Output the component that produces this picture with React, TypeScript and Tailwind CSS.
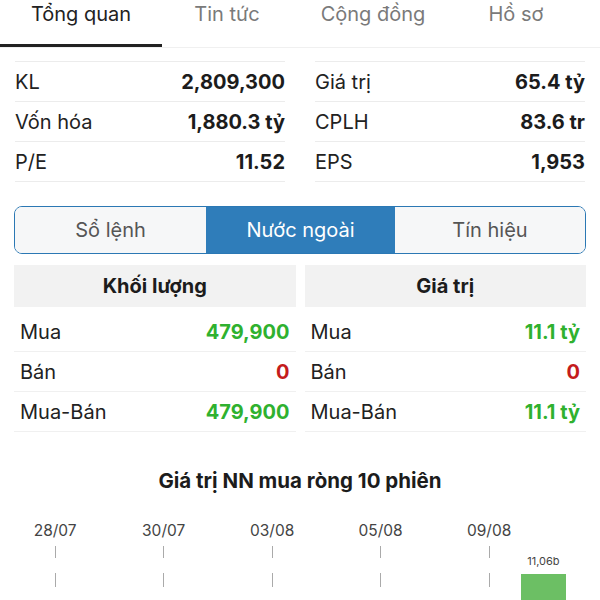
import React from 'react';

const tabs = [
  { label: 'Tổng quan', w: 'w-[162px]', active: true },
  { label: 'Tin tức', w: 'w-[130px]', active: false },
  { label: 'Cộng đồng', w: 'w-[162px]', active: false },
  { label: 'Hồ sơ', w: 'w-[124px]', active: false },
];

const leftStats = [
  ['KL', '2,809,300'],
  ['Vốn hóa', '1,880.3 tỷ'],
  ['P/E', '11.52'],
];

const rightStats = [
  ['Giá trị', '65.4 tỷ'],
  ['CPLH', '83.6 tr'],
  ['EPS', '1,953'],
];

const volumeRows = [
  { label: 'Mua', value: '479,900', color: 'text-[#2fb12f]' },
  { label: 'Bán', value: '0', color: 'text-[#c41c1c]' },
  { label: 'Mua-Bán', value: '479,900', color: 'text-[#2fb12f]' },
];

const valueRows = [
  { label: 'Mua', value: '11.1 tỷ', color: 'text-[#2fb12f]' },
  { label: 'Bán', value: '0', color: 'text-[#c41c1c]' },
  { label: 'Mua-Bán', value: '11.1 tỷ', color: 'text-[#2fb12f]' },
];

// 10 sessions, every other one labelled
const sessions = ['28/07', '', '30/07', '', '03/08', '', '05/08', '', '09/08', ''];

const StatColumn = ({ rows }: { rows: string[][] }) => (
  <div className="border-t border-[#ececec]">
    {rows.map(([label, value]) => (
      <div key={label} className="h-[40px] flex items-center justify-between border-b border-[#ececec]">
        <span className="text-[#222]">{label}</span>
        <span className="font-bold text-[#1c1c1c]">{value}</span>
      </div>
    ))}
  </div>
);

const ForeignColumn = ({ title, rows }: { title: string; rows: typeof volumeRows }) => (
  <div>
    <div className="h-[42px] bg-[#f2f2f2] flex items-center justify-center font-bold text-[#1c1c1c]">{title}</div>
    <div className="pt-[5px]">
      {rows.map((r) => (
        <div key={r.label} className="h-[40px] px-[6px] flex items-center justify-between border-b border-[#f0f0f0]">
          <span className="text-[#222]">{r.label}</span>
          <span className={`font-bold ${r.color}`}>{r.value}</span>
        </div>
      ))}
    </div>
  </div>
);

const App = () => {
  return (
    <div className="w-[600px] h-[600px] overflow-hidden bg-white text-[20px]" style={{ fontFamily: 'Inter, "Noto Sans", sans-serif' }}>
      {/* Top tabs */}
      <nav className="flex h-[48px] border-b border-[#f0f0f0]">
        {tabs.map((t) => (
          <div
            key={t.label}
            className={`${t.w} flex justify-center leading-[28px] ${t.active ? 'text-[#222] border-b-[3px] border-[#222]' : 'text-[#7a7a7a]'}`}
          >
            {t.label}
          </div>
        ))}
      </nav>

      {/* Overview stats */}
      <section className="mt-[13px] px-[15px] grid grid-cols-2 gap-x-[30px]">
        <StatColumn rows={leftStats} />
        <StatColumn rows={rightStats} />
      </section>

      {/* Segmented control */}
      <div className="mt-[24px] mx-[14px] h-[48px] border border-[#2b78b4] rounded-[8px] overflow-hidden grid grid-cols-[191px_189px_1fr]">
        <div className="bg-[#f6f7f8] flex items-center justify-center text-[#555]">Sổ lệnh</div>
        <div className="bg-[#2f7dba] flex items-center justify-center text-white">Nước ngoài</div>
        <div className="bg-[#f6f7f8] flex items-center justify-center text-[#555]">Tín hiệu</div>
      </div>

      {/* Foreign trading */}
      <section className="mt-[11px] px-[14px] grid grid-cols-2 gap-x-[9px]">
        <ForeignColumn title="Khối lượng" rows={volumeRows} />
        <ForeignColumn title="Giá trị" rows={valueRows} />
      </section>

      {/* Chart */}
      <h3 className="mt-[35px] text-center text-[20.5px] leading-[28px] font-bold text-[#1c1c1c]">Giá trị NN mua ròng 10 phiên</h3>
      <div className="mt-[26px] ml-[28px] flex">
        {sessions.map((d, i) => (
          <div key={i} className="w-[54.25px] flex flex-col items-center">
            <div className="h-[20px] text-[15.5px] leading-[20px] text-[#444]">{d}</div>
            {d && (
              <>
                <div className="mt-[5px] w-px h-[12px] bg-[#aaa]" />
                <div className="mt-[15px] w-px h-[14px] bg-[#aaa]" />
              </>
            )}
            {i === 9 && (
              <>
                <div className="mt-[14px] h-[12px] text-[11px] leading-[12px] text-[#444]">11,06b</div>
                <div className="mt-[7px] w-[45px] h-[40px] bg-[#6cbf64]" />
              </>
            )}
          </div>
        ))}
      </div>
    </div>
  );
};

export default App;
